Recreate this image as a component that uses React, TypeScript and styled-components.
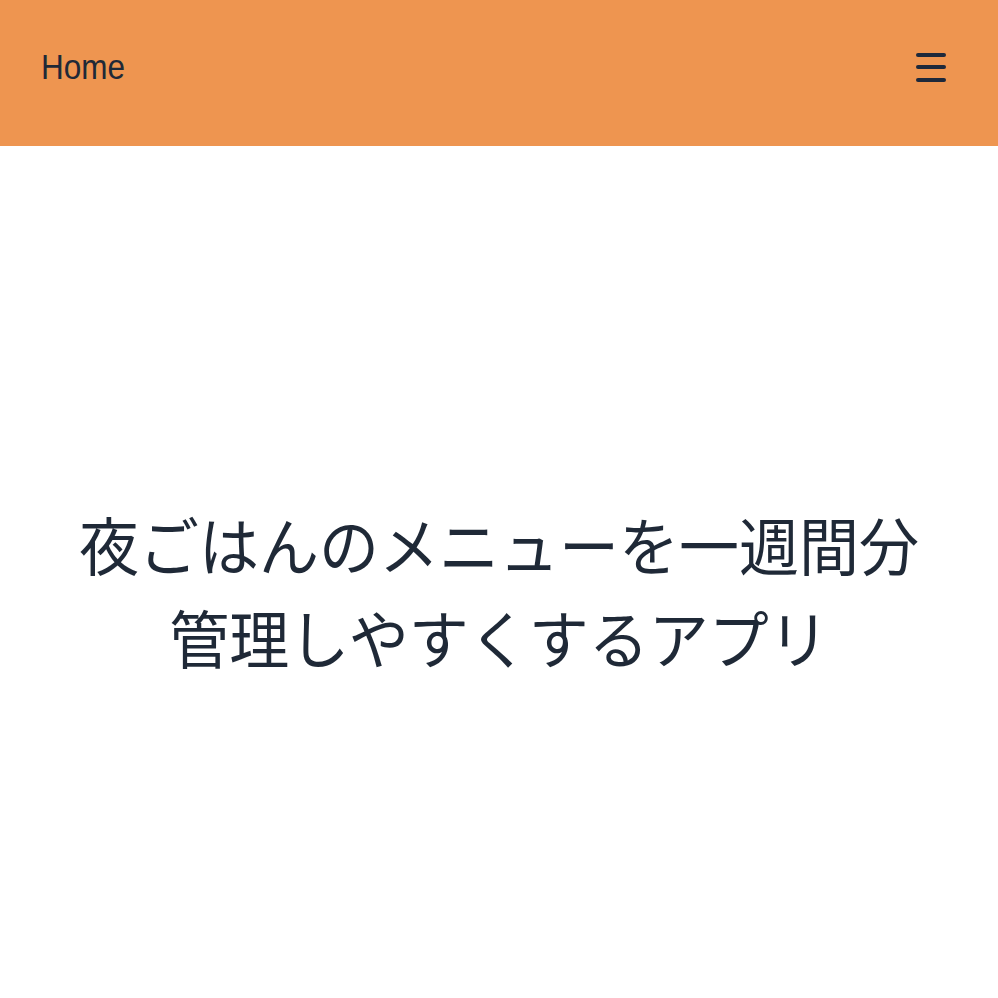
import React from "react";
import styled, { createGlobalStyle } from "styled-components";

const GlobalStyle = createGlobalStyle`
  html, body { margin: 0; padding: 0; background: #ffffff; }
  body { font-family: "Liberation Sans", Arial, sans-serif; color: #1f2937; }
`;

const Page = styled.div`
  display: flex;
  flex-direction: column;
  width: 998px;
  height: 998px;
`;

const Header = styled.header`
  display: flex;
  align-items: center;
  justify-content: space-between;
  height: 146px;
  padding: 0 52px 12px 41px;
  background: #ee9550;
  box-sizing: border-box;
`;

const HomeLink = styled.a`
  font-family: "Liberation Sans", Arial, sans-serif;
  font-size: 31.5px;
  color: #1f2937;
  text-decoration: none;
  display: inline-block;
  transform: scaleY(1.14);
`;

const MenuButton = styled.button`
  display: flex;
  flex-direction: column;
  gap: 8.5px;
  padding: 0;
  border: none;
  background: transparent;
  cursor: pointer;
`;

const Bar = styled.span`
  display: block;
  width: 30px;
  height: 4px;
  border-radius: 2px;
  background: #1e293b;
`;

const Main = styled.main`
  flex: 1;
  display: flex;
  align-items: center;
  justify-content: center;
  padding-top: 34px;
`;

const Title = styled.h1`
  margin: 0;
  font-family: "Noto Sans CJK JP", "Noto Sans", sans-serif;
  font-weight: 400;
  font-size: 60px;
  line-height: 88px;
  text-align: center;
  color: #1f2937;
  transform: scaleY(1.05);
`;

export default function App() {
  return (
    <>
      <GlobalStyle />
      <Page>
        <Header>
          <HomeLink href="#">Home</HomeLink>
          <MenuButton aria-label="menu">
            <Bar />
            <Bar />
            <Bar />
          </MenuButton>
        </Header>
        <Main>
          <Title>
            夜ごはんのメニューを一週間分
            <br />
            管理しやすくするアプリ
          </Title>
        </Main>
      </Page>
    </>
  );
}
